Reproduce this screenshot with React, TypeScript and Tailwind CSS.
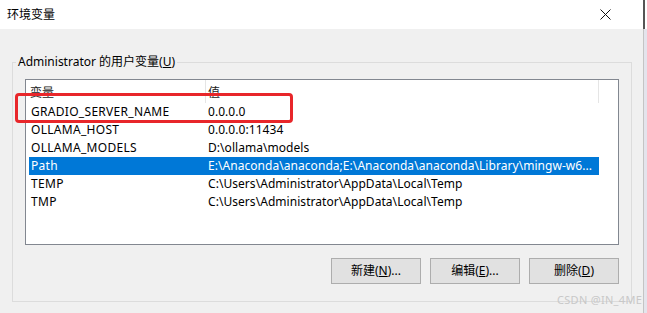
import React from "react";

const FONT = "font-['Noto_Sans','Noto_Sans_CJK_SC',sans-serif]";

const ROWS = [
  { name: "GRADIO_SERVER_NAME", value: "0.0.0.0" },
  { name: "OLLAMA_HOST", value: "0.0.0.0:11434" },
  { name: "OLLAMA_MODELS", value: "D:\\ollama\\models" },
  { name: "Path", value: "E:\\Anaconda\\anaconda;E:\\Anaconda\\anaconda\\Library\\mingw-w6...", selected: true },
  { name: "TEMP", value: "C:\\Users\\Administrator\\AppData\\Local\\Temp" },
  { name: "TMP", value: "C:\\Users\\Administrator\\AppData\\Local\\Temp" },
];

function CloseIcon() {
  return (
    <svg width="11" height="11" viewBox="0 0 11 11" className="block">
      <path d="M0.5 0.5 L10.5 10.5 M10.5 0.5 L0.5 10.5" stroke="#111" strokeWidth="1" />
    </svg>
  );
}

function Button({ children }: { children: React.ReactNode }) {
  return (
    <button className="w-[90px] h-[26px] bg-[#e1e1e1] border border-[#adadad] text-[12px] text-black flex items-center justify-center">
      {children}
    </button>
  );
}

export default function App() {
  return (
    <div className={`relative w-[647px] h-[313px] flex overflow-hidden ${FONT} text-[12px] text-black`}>
      <div className="w-[643px] flex flex-col">
        {/* Title bar */}
        <div className="h-[29px] bg-white flex items-center justify-between pl-[7px] pr-[32px]">
          <span className="text-[12px] leading-none">环境变量</span>
          <CloseIcon />
        </div>

        {/* Body */}
        <div className="flex-1 bg-[#f0f0f0] pt-[25px]">
          <fieldset className="ml-[12px] w-[620px] h-[248px] border border-[#dcdcdc] flex flex-col">
            <legend className="ml-[3px] px-[2px] text-[12px] leading-[16px]">
              Administrator 的用户变量(<span className="underline">U</span>)
            </legend>

            <div className="ml-[12px] mt-[9px] w-[594px] h-[166px] border border-[#828790] bg-white">
              <div className="ml-[3px] w-[570px] h-[23px] flex items-center text-[12px] text-[#222]">
                <div className="w-[177px] pl-[1px] pt-[2px] h-full flex items-center border-r border-[#e5e5e5]">变量</div>
                <div className="flex-1 pl-[2px] pt-[2px] h-full flex items-center border-r border-[#e5e5e5]">值</div>
              </div>
              {ROWS.map((r) => (
                <div
                  key={r.name}
                  className={`ml-[3px] w-[570px] h-[18px] flex items-center whitespace-nowrap ${
                    r.selected ? "bg-[#0078d7] text-white" : "text-black"
                  }`}
                >
                  <div className="w-[177px] pl-[2px] tracking-[0.3px]">{r.name}</div>
                  <div className="flex-1 pl-[2px] overflow-hidden tracking-[0.05px]">{r.value}</div>
                </div>
              ))}
            </div>

            <div className="flex justify-end gap-[9px] mt-[13px] pr-[12px]">
              <Button>
                新建(<span className="underline">N</span>)...
              </Button>
              <Button>
                编辑(<span className="underline">E</span>)...
              </Button>
              <Button>
                删除(<span className="underline">D</span>)
              </Button>
            </div>
          </fieldset>
        </div>
      </div>

      {/* Right window edge */}
      <div className="w-[4px] flex flex-col">
        <div className="h-[29px] bg-white border-l-2 border-[#555]" />
        <div className="flex-1 bg-[#e4e4ec] border-l border-[#c4c4c4]" />
      </div>

      {/* Red annotation box */}
      <div className="absolute left-[15px] top-[93px] w-[278px] h-[30px] border-[3px] border-[#e8262a] rounded-[4px]" />

      {/* Watermark */}
      <div className="absolute left-[557px] top-[294px] text-[11px] leading-[12px] text-[#c8c8c8] tracking-[0.3px]">
        CSDN @IN_4ME
      </div>
    </div>
  );
}
